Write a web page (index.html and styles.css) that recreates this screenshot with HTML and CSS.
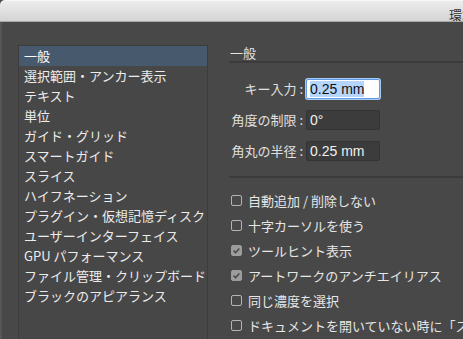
FILE: index.html
```html
<!DOCTYPE html>
<html lang="ja">
<head>
    <meta charset="UTF-8">
    <title>環境設定</title>
    <link rel="stylesheet" href="styles.css">
</head>
<body>
    <div class="titlebar">
        <span class="title">環境設定</span>
    </div>
    <div class="window">
        <div class="sidebar">
            <ul class="category-list">
                <li class="selected">一般</li>
                <li>選択範囲・アンカー表示</li>
                <li>テキスト</li>
                <li>単位</li>
                <li>ガイド・グリッド</li>
                <li>スマートガイド</li>
                <li>スライス</li>
                <li>ハイフネーション</li>
                <li>プラグイン・仮想記憶ディスク</li>
                <li>ユーザーインターフェイス</li>
                <li>GPU パフォーマンス</li>
                <li>ファイル管理・クリップボード</li>
                <li>ブラックのアピアランス</li>
            </ul>
        </div>

        <div class="panel">
            <h2 class="panel-heading">一般</h2>

            <div class="fields">
                <div class="field">
                    <label>キー入力 :</label>
                    <div class="field-input focused"><span class="selection">0.25 mm</span></div>
                </div>
                <div class="field">
                    <label>角度の制限 :</label>
                    <div class="field-input">0°</div>
                </div>
                <div class="field">
                    <label>角丸の半径 :</label>
                    <div class="field-input">0.25 mm</div>
                </div>
            </div>

            <div class="options">
                <div class="option"><span class="checkbox"></span>自動追加 / 削除しない</div>
                <div class="option"><span class="checkbox"></span>十字カーソルを使う</div>
                <div class="option"><span class="checkbox checked"><svg viewBox="0 0 11 11" width="11" height="11"><path d="M2.6 5.6 L4.6 7.6 L8.4 3.4" fill="none" stroke="#4a4a4a" stroke-width="1.5"/></svg></span>ツールヒント表示</div>
                <div class="option"><span class="checkbox checked"><svg viewBox="0 0 11 11" width="11" height="11"><path d="M2.6 5.6 L4.6 7.6 L8.4 3.4" fill="none" stroke="#4a4a4a" stroke-width="1.5"/></svg></span>アートワークのアンチエイリアス</div>
                <div class="option"><span class="checkbox"></span>同じ濃度を選択</div>
                <div class="option"><span class="checkbox"></span>ドキュメントを開いていない時に「スタート」ワークスペースを表示</div>
            </div>
        </div>
    </div>
</body>
</html>
```

FILE: styles.css
```css
body, html {
    margin: 0;
    padding: 0;
    width: 100%;
    height: 100%;
    overflow: hidden;
    background: #484848;
    font-family: "Noto Sans CJK JP", "Liberation Sans", sans-serif;
    color: #e4e4e4;
}

.titlebar {
    height: 22px;
    box-sizing: border-box;
    padding-left: 449px;
    background: linear-gradient(#ececec, #d4d4d4);
    border-top: 1px solid #f6f6f6;
    border-bottom: 1px solid #a9a9a9;
    border-top-left-radius: 5px;
    white-space: nowrap;
    overflow: hidden;
}

.title {
    font-size: 13px;
    line-height: 20px;
    color: #2e2e2e;
}

.window {
    display: flex;
    height: calc(100% - 22px);
    border-left: 2px solid #565656;
    box-sizing: border-box;
}

.sidebar {
    padding: 23px 0 0 16px;
}

.category-list {
    list-style: none;
    margin: 0;
    padding: 0;
    width: 188px;
    height: 320px;
    border: 1px solid #3c3c3c;
    background: #474747;
}

.category-list li {
    height: 20px;
    padding-left: 5px;
    font-size: 13px;
    line-height: 20px;
    color: #ececec;
    white-space: nowrap;
}

.category-list li.selected {
    background: #47596c;
    color: #ffffff;
}

.panel {
    flex: 1;
    margin-left: 21px;
    padding-top: 23px;
    min-width: 0;
}

.panel-heading {
    margin: 0;
    padding-left: 1px;
    height: 16px;
    font-size: 13px;
    font-weight: normal;
    line-height: 16px;
    color: #e4e4e4;
    border-bottom: 2px solid #3b3b3b;
}

.fields {
    display: flex;
    flex-direction: column;
    gap: 11px;
    padding: 16px 0 15px;
    border-bottom: 2px solid #3b3b3b;
}

.field {
    display: flex;
    align-items: center;
    gap: 3px;
}

.field label {
    width: 74px;
    text-align: right;
    font-size: 13px;
    line-height: 20px;
    color: #e0e0e0;
    white-space: nowrap;
}

.field-input {
    width: 74px;
    height: 20px;
    box-sizing: border-box;
    padding-left: 3px;
    background: #3c3c3c;
    border: 1px solid #343434;
    border-radius: 2px;
    font-family: "Liberation Sans", sans-serif;
    font-size: 14px;
    line-height: 18px;
    color: #f0f0f0;
}

.field-input.focused {
    background: #ffffff;
    border: 1px solid #5b9be8;
    box-shadow: 0 0 0 1px #a8c9f2;
    color: #111111;
}

.selection {
    background: #b6d5fb;
}

.options {
    display: flex;
    flex-direction: column;
    padding-top: 10px;
}

.option {
    display: flex;
    align-items: center;
    gap: 6px;
    height: 25px;
    padding-left: 2px;
    font-size: 13px;
    color: #e6e6e6;
    white-space: nowrap;
}

.checkbox {
    flex: none;
    width: 11px;
    height: 11px;
    box-sizing: border-box;
    border: 1px solid #b4b4b4;
    border-radius: 2px;
    position: relative;
}

.checkbox.checked {
    background: #9c9c9c;
    border-color: #9c9c9c;
}

.checkbox svg {
    position: absolute;
    left: -1px;
    top: -1px;
}
```
